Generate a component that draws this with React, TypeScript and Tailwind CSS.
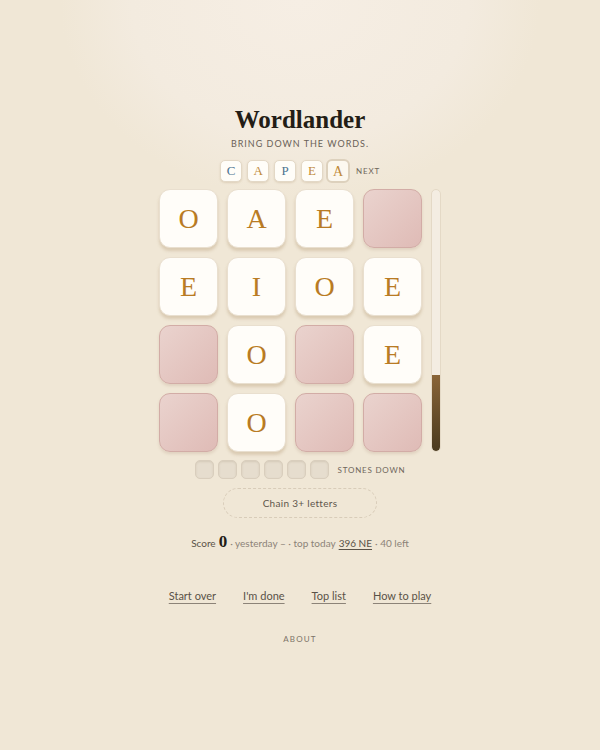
import React from "react";

const grid: (string | null)[][] = [
  ["O", "A", "E", null],
  ["E", "I", "O", "E"],
  [null, "O", null, "E"],
  [null, "O", null, null],
];

const nextLetters = [
  { l: "C", blue: true },
  { l: "A", blue: false },
  { l: "P", blue: true },
  { l: "E", blue: false },
];

const serif = "font-['Liberation_Serif','DejaVu_Serif',serif]";
const sans = "font-['Lato','Open_Sans',sans-serif]";

function Tile({ letter }: { letter: string | null }) {
  if (!letter) {
    return (
      <div className="w-[59px] h-[59px] rounded-[11px] border border-[#d2aca6] bg-gradient-to-br from-[#ead3ce] to-[#dfbbb6] shadow-[0_2px_3px_rgba(150,110,90,0.18)]" />
    );
  }
  return (
    <div
      className={`w-[59px] h-[59px] rounded-[11px] border border-[#e9dfcf] bg-[#fffdf9] shadow-[0_3px_3px_rgba(170,140,100,0.3)] flex items-center justify-center text-[28px] text-[#b97b24] ${serif}`}
    >
      {letter}
    </div>
  );
}

export default function App() {
  return (
    <div
      className={`w-full min-h-[750px] bg-[#f1e8da] bg-[radial-gradient(ellipse_240px_200px_at_50%_0%,#f6eee4,#f3ebdf_70%,#f0e7d6)] flex flex-col items-center ${sans}`}
    >
      <h1 className={`mt-[105px] text-[25px] leading-[30px] font-bold text-[#231d16] ${serif}`}>
        Wordlander
      </h1>
      <div className="mt-[2px] text-[9px] leading-[14px] tracking-[0.11em] text-[#6a6157]">
        BRING DOWN THE WORDS.
      </div>

      {/* next queue */}
      <div className="mt-[7px] flex items-center h-[26px]">
        <div className="flex items-center gap-[5px]">
          {nextLetters.map((n, i) => (
            <div
              key={i}
              className={`w-[22px] h-[22px] rounded-[5px] border border-[#e3d8c6] bg-[#fffdf8] shadow-[0_1px_2px_rgba(170,140,100,0.25)] flex items-center justify-center text-[13px] ${serif} ${
                n.blue ? "text-[#4c7390]" : "text-[#c08a3a]"
              }`}
            >
              {n.l}
            </div>
          ))}
          <div
            className={`-ml-[2px] w-[24px] h-[24px] rounded-[6px] border-2 border-[#ddd1bd] bg-[#fcf8ef] flex items-center justify-center text-[14px] text-[#c08a3a] ${serif}`}
          >
            A
          </div>
        </div>
        <span className="ml-[6px] text-[8px] tracking-[0.1em] text-[#6f665b]">NEXT</span>
      </div>

      <div className="mt-[5px] flex items-start gap-[9px]">
        <div className="grid grid-cols-4 gap-[9px]">
          {grid.flat().map((l, i) => (
            <Tile key={i} letter={l} />
          ))}
        </div>
        <div className="w-[10px] h-[263px] rounded-full border border-[#e4d9c6] bg-[#f4ede2] flex flex-col justify-end overflow-hidden">
          <div className="h-[76px] rounded-b-full bg-gradient-to-b from-[#8a6538] to-[#4a3a1e]" />
        </div>
      </div>

      <div className="mt-[8px] flex items-center">
        <div className="flex gap-[4px]">
          {Array.from({ length: 6 }).map((_, i) => (
            <div
              key={i}
              className="w-[19px] h-[19px] rounded-[5px] border border-[#d9cebd] bg-[#e6ddce] shadow-[inset_0_1px_2px_rgba(120,100,70,0.15)]"
            />
          ))}
        </div>
        <span className="ml-[9px] text-[8px] tracking-[0.1em] text-[#6f665b]">STONES DOWN</span>
      </div>

      <div className="mt-[9px] w-[154px] h-[30px] rounded-full border border-dashed border-[#d8ccb9] flex items-center justify-center text-[10px] tracking-[0.03em] text-[#5e564c]">
        Chain 3+ letters
      </div>

      <div className="mt-[15px] flex items-baseline text-[10px] text-[#8c8378]">
        <span className="text-[#5a5247]">Score</span>
        <span className={`ml-[3px] text-[17px] leading-none font-bold text-[#231d16] ${serif}`}>0</span>
        <span className="ml-[3px]">· yesterday – · top today</span>
        <span className="ml-[3px] underline underline-offset-2 text-[#5a5247]">396 NE</span>
        <span className="ml-[3px]">· 40 left</span>
      </div>

      <div className="mt-[37px] flex gap-[27px] text-[11px] text-[#5a5247]">
        <span className="underline underline-offset-[3px] decoration-[#8c8378]">Start over</span>
        <span className="underline underline-offset-[3px] decoration-[#8c8378]">I'm done</span>
        <span className="underline underline-offset-[3px] decoration-[#8c8378]">Top list</span>
        <span className="underline underline-offset-[3px] decoration-[#8c8378]">How to play</span>
      </div>

      <div className="mt-[28px] text-[8px] tracking-[0.15em] text-[#7d7469]">ABOUT</div>
    </div>
  );
}
